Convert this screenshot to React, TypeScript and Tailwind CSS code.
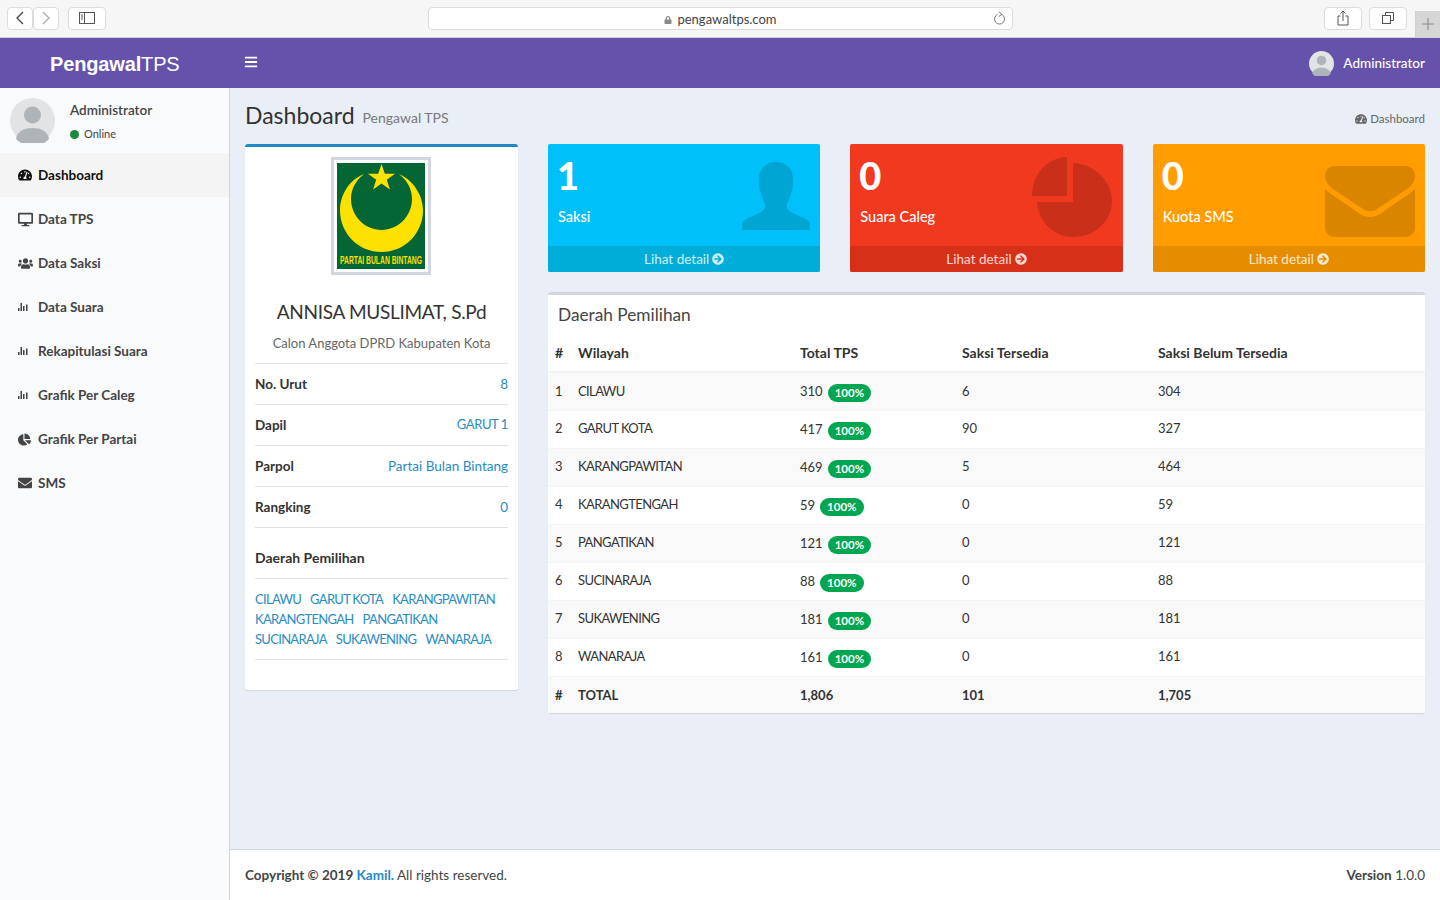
import { FaArrowCircleRight, FaBars, FaChartPie, FaDesktop, FaEnvelope, FaLock, FaTachometerAlt, FaUsers } from 'react-icons/fa';
import { ReactNode } from 'react';

const rows = [
  ['1', 'CILAWU', '310', '6', '304'],
  ['2', 'GARUT KOTA', '417', '90', '327'],
  ['3', 'KARANGPAWITAN', '469', '5', '464'],
  ['4', 'KARANGTENGAH', '59', '0', '59'],
  ['5', 'PANGATIKAN', '121', '0', '121'],
  ['6', 'SUCINARAJA', '88', '0', '88'],
  ['7', 'SUKAWENING', '181', '0', '181'],
  ['8', 'WANARAJA', '161', '0', '161'],
];

const dapil = [
  ['CILAWU', 'GARUT KOTA', 'KARANGPAWITAN'],
  ['KARANGTENGAH', 'PANGATIKAN'],
  ['SUCINARAJA', 'SUKAWENING', 'WANARAJA'],
];

function BarsIcon() {
  return (
    <svg width="11" height="10" viewBox="0 0 11 10" fill="currentColor">
      <rect x="0" y="6" width="1.5" height="3" />
      <rect x="2.5" y="1" width="1.5" height="8" />
      <rect x="5" y="4" width="1.5" height="5" />
      <rect x="8" y="2.5" width="1.5" height="6.5" />
    </svg>
  );
}

function Avatar({ size }: { size: string }) {
  return (
    <svg className={size} viewBox="0 0 45 45">
      <circle cx="22.5" cy="22.5" r="22.5" fill="#e1e3e5" />
      <circle cx="22.5" cy="17" r="8.5" fill="#aeb4b7" />
      <path d="M6 41c1-8 9-11 16.500-11S38 33 39 41a22.500 22.500 0 0 1-33 0z" fill="#aeb4b7" />
    </svg>
  );
}

const navItems: { label: string; icon: ReactNode; active?: boolean }[] = [
  { label: 'Dashboard', icon: <FaTachometerAlt size={14} />, active: true },
  { label: 'Data TPS', icon: <FaDesktop size={15} /> },
  { label: 'Data Saksi', icon: <FaUsers size={15} /> },
  { label: 'Data Suara', icon: <BarsIcon /> },
  { label: 'Rekapitulasi Suara', icon: <BarsIcon /> },
  { label: 'Grafik Per Caleg', icon: <BarsIcon /> },
  { label: 'Grafik Per Partai', icon: <FaChartPie size={13} /> },
  { label: 'SMS', icon: <FaEnvelope size={14} /> },
];

function ChromeButton({ className, children }: { className: string; children: ReactNode }) {
  return (
    <div className={`flex h-[23px] items-center justify-center rounded-[4px] border border-[#dcdcdc] bg-white text-[#555] ${className}`}>
      {children}
    </div>
  );
}

function BrowserBar() {
  return (
    <div className="relative flex h-[38px] items-center border-b border-[#d2d2d2] bg-[#f6f6f6] pb-[1px] pl-[7px]">
      <ChromeButton className="w-[26px]">
        <svg width="10" height="14" viewBox="0 0 10 14" fill="none" stroke="#444" strokeWidth="1.3"><path d="M8 1 2 7l6 6" /></svg>
      </ChromeButton>
      <ChromeButton className="w-[26px]">
        <svg width="10" height="14" viewBox="0 0 10 14" fill="none" stroke="#aaa" strokeWidth="1.3"><path d="m2 1 6 6-6 6" /></svg>
      </ChromeButton>
      <ChromeButton className="ml-[9px] w-[38px]">
        <svg width="16" height="12" viewBox="0 0 16 12" fill="none" stroke="#555"><rect x="0.500" y="0.500" width="15" height="11" /><path d="M5.500 0.500v11" /><path d="M2 3h2M2 5h2M2 7h2" /></svg>
      </ChromeButton>
      <div className="relative ml-[322px] flex h-[23px] w-[585px] items-center justify-center gap-[5px] rounded-[4px] border border-[#dcdcdc] bg-white pt-[3px] text-[13px] text-[#444]">
        <FaLock size={8} className="text-[#888]" />
        pengawaltps.com
        <svg className="absolute right-[6px] top-[3px]" width="13" height="15" viewBox="0 0 13 15" fill="none" stroke="#777">
          <path d="M8.800 3.600a5 5 0 1 1-4.300-.1" />
          <path d="M5.800 0.800 8.800 3.400 5.800 5.600" />
        </svg>
      </div>
      <ChromeButton className="ml-[311px] w-[38px]">
        <svg width="12" height="16" viewBox="0 0 12 16" fill="none" stroke="#555"><path d="M3.500 6H1v9h10V6H8.500" /><path d="M6 11V1M3.500 3.500 6 1l2.500 2.500" /></svg>
      </ChromeButton>
      <ChromeButton className="ml-[7px] w-[38px]">
        <svg width="12" height="12" viewBox="0 0 12 12" fill="none" stroke="#555"><rect x="0.500" y="3.500" width="8" height="8" /><path d="M3.500 3.500v-3h8v8h-3" /></svg>
      </ChromeButton>
      <div className="absolute bottom-0 right-0 flex h-[26px] w-[25px] items-center justify-center border-l border-[#d0d0d0] bg-[#d6d6d6]">
        <svg width="12" height="12" viewBox="0 0 12 12" stroke="#888"><path d="M6 0v12M0 6h12" /></svg>
      </div>
    </div>
  );
}

function TopHeader() {
  return (
    <div className="flex h-[50px] items-center bg-[#6553ab] text-white">
      <div className="w-[230px] pl-[50px] pt-[2px] font-['Liberation_Sans',sans-serif] text-[20px] tracking-[-0.15px]">
        <b>Pengawal</b>TPS
      </div>
      <div className="ml-[14px] mt-[-2px]"><FaBars size={14} /></div>
      <div className="ml-auto flex items-center pr-[15px] text-[13.5px] font-medium">
        <Avatar size="h-[25px] w-[25px]" />
        <span className="ml-[9px]">Administrator</span>
      </div>
    </div>
  );
}

function Sidebar() {
  return (
    <aside className="w-[230px] shrink-0 border-r border-[#d2d6de] bg-[#f9fafc]">
      <div className="flex h-[65px] pl-[10px] pt-[10px]">
        <Avatar size="h-[45px] w-[45px]" />
        <div className="ml-[15px]">
          <div className="mt-[2px] text-[13.5px] font-semibold leading-[20px] text-[#444]">Administrator</div>
          <div className="mt-[4px] flex items-center gap-[5px] text-[11px] leading-[20px] text-[#444]">
            <span className="h-[9px] w-[9px] rounded-full bg-[#1a8a3c]" />
            Online
          </div>
        </div>
      </div>
      <nav>
        {navItems.map(item => (
          <div key={item.label} className={`flex h-[44px] items-center text-[13.5px] font-bold ${item.active ? 'bg-[#f4f4f5] text-[#111]' : 'text-[#444]'}`}>
            <span className="flex w-[38px] justify-start pl-[18px]">{item.icon}</span>
            <span>{item.label}</span>
          </div>
        ))}
      </nav>
    </aside>
  );
}

function ProfileRow({ label, value, upper }: { label: string; value: string; upper?: boolean }) {
  return (
    <div className="flex h-[41px] items-center justify-between border-b border-[#dfe1e6]">
      <span className="text-[13.5px] font-bold text-[#333]">{label}</span>
      <span className={upper ? 'text-[13px] tracking-[-0.4px] text-[#2a8cc4]' : 'text-[13.5px] text-[#2a8cc4]'}>{value}</span>
    </div>
  );
}

function PartyLogo() {
  return (
    <div className="ml-[76px] h-[118px] w-[100px] border-[3px] border-[#d2d6de] p-[3px]">
      <svg className="block h-[106px] w-[88px]" viewBox="0 0 88 106">
        <rect width="88" height="106" fill="#046535" />
        <path d="M27 11C12 17 3 32 3 47.500 3 70 21 89 44.500 89S86 70 86 47.500C86 32 76 17 62 11c8 6 13 15 13 25 0 17-14 31-30.500 31S14 53 14 36C14 26 19 17 27 11z" fill="#fde100" />
        <path d="M44.500 1l3.300 9.700h10.200l-8.200 6 3.100 9.800-8.400-6-8.400 6 3.100-9.800-8.200-6h10.200z" fill="#fde100" />
        <text x="44" y="100.500" textAnchor="middle" fontFamily="Liberation Sans, sans-serif" fontWeight="700" fontSize="10" fill="#fde100" textLength="82" lengthAdjust="spacingAndGlyphs">PARTAI BULAN BINTANG</text>
      </svg>
    </div>
  );
}

function ProfileCard() {
  return (
    <div className="h-[546px] w-[273px] shrink-0 rounded-[3px] border-t-[3px] border-[#1f8ac4] bg-white px-[10px] pt-[10px] shadow-[0_1px_1px_rgba(0,0,0,0.1)]">
      <PartyLogo />
      <h3 className="mt-[22px] text-center text-[19px] leading-[30px] tracking-[-0.3px] text-[#333]">ANNISA MUSLIMAT, S.Pd</h3>
      <p className="mt-[6px] h-[31px] border-b border-[#dfe1e6] text-center text-[13px] leading-[20px] text-[#666]">Calon Anggota DPRD Kabupaten Kota</p>
      <ProfileRow label="No. Urut" value="8" />
      <ProfileRow label="Dapil" value="GARUT 1" upper />
      <ProfileRow label="Parpol" value="Partai Bulan Bintang" />
      <ProfileRow label="Rangking" value="0" />
      <div className="flex h-[51px] items-center border-b border-[#dfe1e6] pt-[8px] font-bold text-[#333]">Daerah Pemilihan</div>
      <div className="border-b border-[#dfe1e6] py-[10px] text-[13px] leading-[20px] tracking-[-0.7px] text-[#2a8cc4]">
        {dapil.map((line, i) => (
          <div key={i} className="flex h-[20px] gap-[9px] whitespace-nowrap">
            {line.map(name => <span key={name}>{name}</span>)}
          </div>
        ))}
      </div>
    </div>
  );
}

function StatBox({ value, label, bg, foot, icon }: { value: string; label: string; bg: string; foot: string; icon: ReactNode }) {
  return (
    <div className={`relative h-[128px] overflow-hidden rounded-[2px] text-white ${bg}`}>
      <div className="h-[102px] px-[10px] pt-[9px]">
        <div className="ml-[-1px] text-[38px] font-black leading-[44px]">{value}</div>
        <div className="mt-[10px] text-[14.5px] font-medium leading-[20px]">{label}</div>
      </div>
      <div className={`flex h-[26px] items-center justify-center gap-[3px] text-[13.5px] text-white/80 ${foot}`}>
        Lihat detail <FaArrowCircleRight size={12} />
      </div>
      {icon}
    </div>
  );
}

function DistrictTable() {
  return (
    <div className="mt-[20px] rounded-[3px] border-t-[3px] border-[#d2d6de] bg-white shadow-[0_1px_1px_rgba(0,0,0,0.1)]">
      <h3 className="px-[10px] pt-[8px] text-[17.25px] leading-[24px] text-[#444]">Daerah Pemilihan</h3>
      <table className="mt-[7px] w-full border-collapse text-[#333]">
        <thead>
          <tr className="h-[38px] border-b-2 border-[#f4f4f4] text-left font-bold">
            <th className="w-[23px] pl-[7px]">#</th>
            <th className="w-[222px] pl-[7px]">Wilayah</th>
            <th className="w-[162px] pl-[7px]">Total TPS</th>
            <th className="w-[196px] pl-[7px]">Saksi Tersedia</th>
            <th className="pl-[7px]">Saksi Belum Tersedia</th>
          </tr>
        </thead>
        <tbody className="text-[13px]">
          {rows.map((r, i) => (
            <tr key={r[0]} className={`h-[38px] border-b border-[#f4f4f4] ${i % 2 === 0 ? 'bg-[#f9f9f9]' : ''}`}>
              <td className="pl-[7px]">{r[0]}</td>
              <td className="pl-[7px] tracking-[-0.6px]">{r[1]}</td>
              <td className="pl-[7px] pt-[2px]">
                {r[2]}
                <span className="ml-[5px] inline-block rounded-[9px] bg-[#00a651] px-[7px] align-[-1px] text-[11.5px] font-bold leading-[18px] text-white">100%</span>
              </td>
              <td className="pl-[7px]">{r[3]}</td>
              <td className="pl-[7px]">{r[4]}</td>
            </tr>
          ))}
          <tr className="h-[37px] bg-[#f9f9f9] font-bold">
            <td className="pl-[7px] pt-[1px]">#</td>
            <td className="pl-[7px] pt-[1px]">TOTAL</td>
            <td className="pl-[7px] pt-[1px]">1,806</td>
            <td className="pl-[7px] pt-[1px]">101</td>
            <td className="pl-[7px] pt-[1px]">1,705</td>
          </tr>
        </tbody>
      </table>
    </div>
  );
}

export default function App() {
  return (
    <div className="flex h-[900px] w-[1440px] flex-col overflow-hidden font-['Lato',sans-serif] text-[14px] text-[#333]">
      <BrowserBar />
      <TopHeader />
      <div className="flex min-h-0 flex-1">
        <Sidebar />
        <main className="flex min-w-0 flex-1 flex-col bg-[#eaeff7]">
          <div className="flex-1 px-[15px]">
            <div className="flex h-[56px] items-center">
              <h1 className="mb-[2px] text-[23px] text-[#333]">Dashboard</h1>
              <span className="ml-[8px] mt-[3px] text-[14px] text-[#777]">Pengawal TPS</span>
              <span className="ml-auto mt-[6px] flex items-center gap-[3px] text-[11.5px] text-[#666]">
                <FaTachometerAlt size={12} /> Dashboard
              </span>
            </div>
            <div className="flex gap-[30px]">
              <ProfileCard />
              <div className="min-w-0 flex-1">
                <div className="grid grid-cols-3 gap-[30px]">
                  <StatBox value="1" label="Saksi" bg="bg-[#00c0f9]" foot="bg-[#00add9]" icon={
                    <svg className="absolute right-[10px] top-[18px]" width="68" height="68" viewBox="0 0 68 68" fill="#00a5d4">
                      <path d="M0 68v-6c1-4 6-6 15-10 7-3 9-5 8-10-2-4-4-9-5-14-1-3-1-6-1-12C17 7 24 0 34 0s17 7 17 16c0 6 0 9-1 12-1 5-3 10-5 14-1 5 1 7 8 10 9 4 14 6 15 10v6z" />
                    </svg>
                  } />
                  <StatBox value="0" label="Suara Caleg" bg="bg-[#f0391f]" foot="bg-[#d63118]" icon={
                    <svg className="absolute right-[11px] top-[13px]" width="80" height="80" viewBox="0 0 80 80" fill="#c92f19">
                      <path d="M35 0v39H0C0 17 15 1 35 0z" />
                      <path d="M41 6c22 1 39 19 39 37 0 21-17 37-39 37C22 80 6 64 5 45h36z" />
                    </svg>
                  } />
                  <StatBox value="0" label="Kuota SMS" bg="bg-[#ff9c00]" foot="bg-[#e58c00]" icon={
                    <svg className="absolute right-[10px] top-[22px]" width="90" height="71" viewBox="0 0 90 71" fill="#d98500">
                      <path d="M10 0h70c6 0 10 4 10 10 0 7-6 12-11 15L52 43c-4 3-10 3-14 0L11 25C6 22 0 17 0 10 0 4 4 0 10 0z" />
                      <path d="M0 23c3 3 6 5 9 7l26 18c6 4 14 4 20 0l26-18c3-2 6-4 9-7v38c0 6-4 10-10 10H10C4 71 0 67 0 61z" />
                    </svg>
                  } />
                </div>
                <DistrictTable />
              </div>
            </div>
          </div>
          <footer className="flex h-[51px] shrink-0 items-center justify-between border-t border-[#d2d6de] bg-white px-[15px] text-[13.5px] text-[#444]">
            <span><b>Copyright © 2019 <span className="text-[#1f8ac4]">Kamil.</span></b> All rights reserved.</span>
            <span><b>Version</b> 1.0.0</span>
          </footer>
        </main>
      </div>
    </div>
  );
}
